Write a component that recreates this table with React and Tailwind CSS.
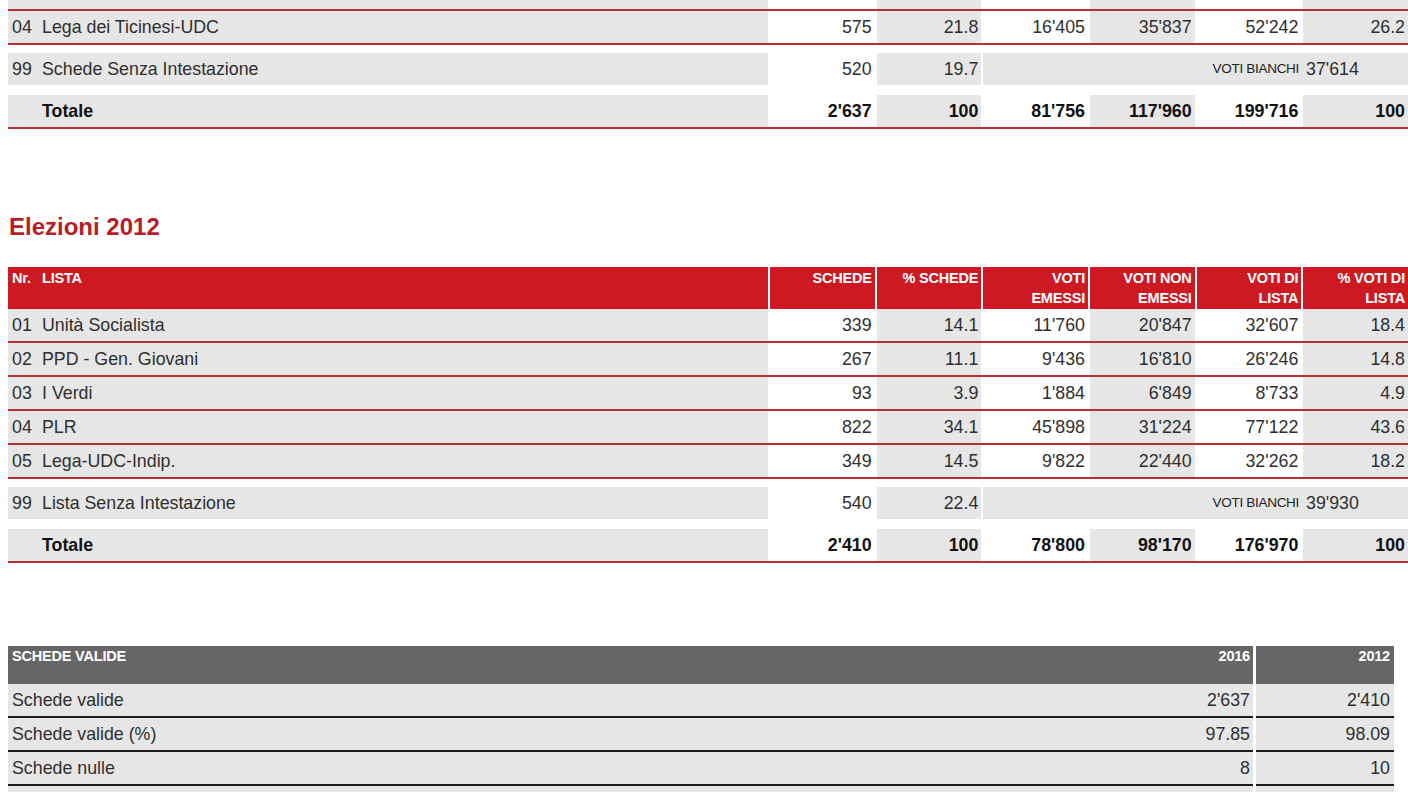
const grid = "grid grid-cols-[760px_repeat(6,1fr)] gap-x-[2px]";

const top2016 = [
  ["04", "Lega dei Ticinesi-UDC", "575", "21.8", "16'405", "35'837", "52'242", "26.2"],
];

const rows2012 = [
  ["01", "Unità Socialista", "339", "14.1", "11'760", "20'847", "32'607", "18.4"],
  ["02", "PPD - Gen. Giovani", "267", "11.1", "9'436", "16'810", "26'246", "14.8"],
  ["03", "I Verdi", "93", "3.9", "1'884", "6'849", "8'733", "4.9"],
  ["04", "PLR", "822", "34.1", "45'898", "31'224", "77'122", "43.6"],
  ["05", "Lega-UDC-Indip.", "349", "14.5", "9'822", "22'440", "32'262", "18.2"],
];

const validRows = [
  ["Schede valide", "2'637", "2'410"],
  ["Schede valide (%)", "97.85", "98.09"],
  ["Schede nulle", "8", "10"],
];

function NameCell({ nr, name, bold }) {
  return (
    <div className="flex h-[32px] items-center bg-[#e6e6e6] pl-[4px]">
      <span className="w-[30px]">{nr}</span>
      <span className={bold ? "font-bold text-[#111]" : ""}>{name}</span>
    </div>
  );
}

function NumCell({ value, gray, bold }) {
  return (
    <div
      className={
        (gray ? "bg-[#e6e6e6] " : "bg-white ") +
        (bold ? "font-bold text-[#111] " : "") +
        "flex h-[32px] items-center justify-end pr-[3px]"
      }
    >
      {value}
    </div>
  );
}

function DataRow({ row, bold }) {
  const [nr, name, ...nums] = row;
  return (
    <div className={grid + " border-b-2 border-[#b0323a]"}>
      <NameCell nr={nr} name={name} bold={bold} />
      {nums.map((n, i) => (
        <NumCell key={i} value={n} gray={i % 2 === 1} bold={bold} />
      ))}
    </div>
  );
}

function BlankRow({ nr, name, schede, perc, bianchi }) {
  return (
    <div className={grid + " mt-[8px] border-b-2 border-transparent"}>
      <NameCell nr={nr} name={name} />
      <NumCell value={schede} />
      <NumCell value={perc} gray />
      <div className="col-span-4 flex h-[32px] items-center bg-[#e6e6e6]">
        <span className="flex-1 pr-[3px] text-right text-[13.5px] tracking-[-0.3px] text-[#222]">
          VOTI BIANCHI
        </span>
        <span className="w-[106px] pl-[4px]">{bianchi}</span>
      </div>
    </div>
  );
}

function Header() {
  const heads = [
    ["", "SCHEDE"],
    ["", "% SCHEDE"],
    ["VOTI", "EMESSI"],
    ["VOTI NON", "EMESSI"],
    ["VOTI DI", "LISTA"],
    ["% VOTI DI", "LISTA"],
  ];
  return (
    <div className={grid + " text-[14.5px] font-bold leading-[20px] tracking-[-0.2px] text-white"}>
      <div className="flex h-[42px] bg-[#cd1a22] pl-[4px] pt-[1px]">
        <span className="w-[30px]">Nr.</span>
        <span>LISTA</span>
      </div>
      {heads.map(([a, b], i) => (
        <div key={i} className="flex h-[42px] flex-col items-end bg-[#cd1a22] pr-[3px] pt-[1px]">
          {a ? (
            <>
              <span>{a}</span>
              <span>{b}</span>
            </>
          ) : (
            <span>{b}</span>
          )}
        </div>
      ))}
    </div>
  );
}

export default function App() {
  return (
    <div className="h-[792px] overflow-hidden bg-white px-2 font-['Liberation_Sans',Arial,sans-serif] text-[17.8px] text-[#2f2f2f]">
      {/* Coda tabella 2016 */}
      <div className="w-[1400px]">
        <div className={grid + " border-b-2 border-[#b0323a]"}>
          <div className="h-[9px] bg-[#e6e6e6]" />
          {[0, 1, 2, 3, 4, 5].map((i) => (
            <div key={i} className={i % 2 ? "h-[9px] bg-[#e6e6e6]" : "h-[9px] bg-white"} />
          ))}
        </div>
        {top2016.map((r) => (
          <DataRow key={r[0]} row={r} />
        ))}
        <BlankRow nr="99" name="Schede Senza Intestazione" schede="520" perc="19.7" bianchi="37'614" />
        <div className="mt-[8px]">
          <DataRow row={["", "Totale", "2'637", "100", "81'756", "117'960", "199'716", "100"]} bold />
        </div>
      </div>

      {/* Elezioni 2012 */}
      <h2 className="mt-[83px] h-[30px] pl-[1px] text-[24px] font-bold leading-[30px] text-[#b81c27]">
        Elezioni 2012
      </h2>
      <div className="mt-[25px] w-[1400px]">
        <Header />
        {rows2012.map((r) => (
          <DataRow key={r[0]} row={r} />
        ))}
        <BlankRow nr="99" name="Lista Senza Intestazione" schede="540" perc="22.4" bianchi="39'930" />
        <div className="mt-[8px]">
          <DataRow row={["", "Totale", "2'410", "100", "78'800", "98'170", "176'970", "100"]} bold />
        </div>
      </div>

      {/* Schede valide */}
      <div className="mt-[83px] w-[1386px]">
        <div className="flex text-[14.5px] font-bold leading-[20px] tracking-[-0.2px] text-white">
          <div className="h-[38px] flex-1 bg-[#666] pl-[4px]">SCHEDE VALIDE</div>
          <div className="h-[38px] w-[138px] bg-[#666] pr-[3px] text-right">2016</div>
          <div className="ml-[3px] h-[38px] w-[138px] bg-[#666] pr-[4px] text-right">2012</div>
        </div>
        {validRows.map(([label, a, b]) => (
          <div key={label} className="flex">
            <div className="flex h-[34px] flex-1 items-center border-b-2 border-[#1a1a1a] bg-[#e6e6e6] pl-[4px]">
              {label}
            </div>
            <div className="flex h-[34px] w-[138px] items-center justify-end border-b-2 border-[#1a1a1a] bg-[#e6e6e6] pr-[3px]">
              {a}
            </div>
            <div className="ml-[3px] flex h-[34px] w-[138px] items-center justify-end border-b-2 border-[#1a1a1a] bg-[#e6e6e6] pr-[4px]">
              {b}
            </div>
          </div>
        ))}
        <div className="flex">
          <div className="h-[34px] flex-1 bg-[#e6e6e6]" />
          <div className="h-[34px] w-[138px] bg-[#e6e6e6]" />
          <div className="ml-[3px] h-[34px] w-[138px] bg-[#e6e6e6]" />
        </div>
      </div>
    </div>
  );
}
